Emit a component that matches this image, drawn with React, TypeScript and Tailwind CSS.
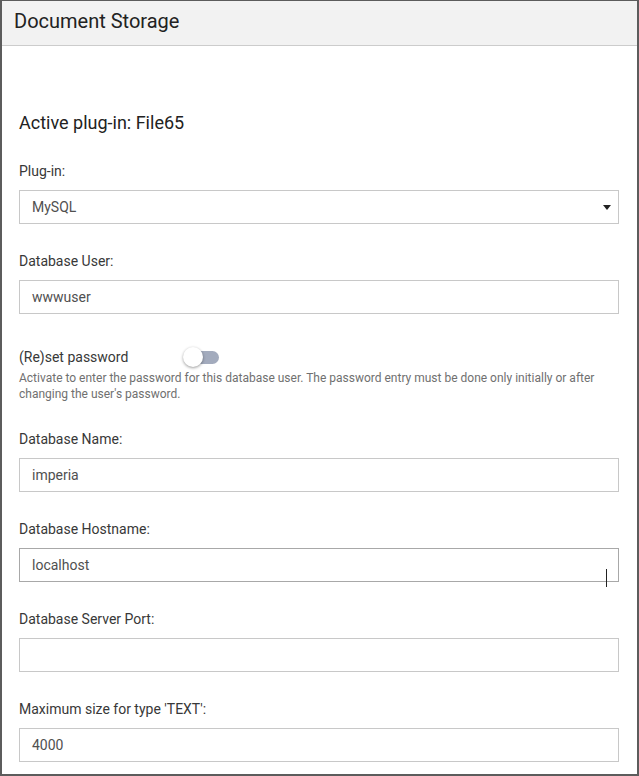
import React, { useState } from 'react';

const font = { fontFamily: 'Roboto, "Liberation Sans", sans-serif' };

function Field({ label, value, hover }: { label: string; value: string; hover?: boolean }) {
  return (
    <div className="mt-[27px]">
      <label className="block text-[14px] leading-5 text-[#383838] mb-[9px]">{label}</label>
      <div
        className={`relative h-[34px] border ${hover ? 'border-[#a8a8a8]' : 'border-[#c8c8c8]'} bg-white flex items-center px-3 text-[14px] text-[#505050]`}
      >
        {value}
        {hover && <span className="absolute left-[586px] top-[20px] w-px h-[18px] bg-[#222]" />}
      </div>
    </div>
  );
}

export default function App() {
  const [reset, setReset] = useState(false);

  return (
    <div style={font} className="w-[639px] h-[776px] border-2 border-t border-[#5c5c5c] bg-white overflow-hidden">
      <div className="h-[45px] bg-[#f2f2f2] border-b border-[#cccccc] flex items-center px-3">
        <h1 className="text-[20px] text-[#222] leading-none -mt-[5px]">Document Storage</h1>
      </div>

      <div className="pl-[17px] pr-[18px]">
        <h2 className="mt-[65px] text-[18px] leading-6 text-[#222]">Active plug-in: File65</h2>

        <div className="mt-[26px]">
          <label className="block text-[14px] leading-5 text-[#383838] mb-[9px]">Plug-in:</label>
          <div className="h-[34px] border border-[#c8c8c8] bg-white flex items-center justify-between pl-3 pr-[7px] text-[14px] text-[#505050]">
            <span>MySQL</span>
            <svg width="8" height="5" viewBox="0 0 8 5">
              <path d="M0 0h8L4 5z" fill="#222" />
            </svg>
          </div>
        </div>

        <Field label="Database User:" value="wwwuser" />

        <div className="mt-[33px]">
          <div className="flex items-center h-5">
            <span className="text-[14px] text-[#383838] w-[164px]">(Re)set password</span>
            <button
              onClick={() => setReset(!reset)}
              className="relative w-[36px] h-5 flex items-center"
            >
              <span className="absolute left-[2px] w-[34px] h-[13px] rounded-full bg-[#a3abbd]" />
              <span
                className={`absolute ${reset ? 'left-[16px]' : 'left-0'} w-5 h-5 rounded-full bg-white shadow-[0_1px_3px_rgba(0,0,0,0.4)]`}
              />
            </button>
          </div>
          <p className="mt-[3px] text-[12px] leading-4 text-[#707070]">
            Activate to enter the password for this database user. The password entry must be done only initially or after
            <br />
            changing the user's password.
          </p>
        </div>

        <Field label="Database Name:" value="imperia" />
        <Field label="Database Hostname:" value="localhost" hover />
        <Field label="Database Server Port:" value="" />
        <Field label="Maximum size for type 'TEXT':" value="4000" />
      </div>
    </div>
  );
}
